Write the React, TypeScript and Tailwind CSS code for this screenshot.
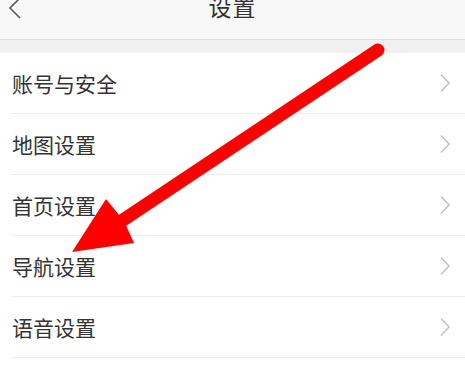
const items = ["账号与安全", "地图设置", "首页设置", "导航设置", "语音设置"]

function Chevron() {
  return (
    <svg width="12" height="20" viewBox="0 0 12 20" fill="none">
      <path d="M2 1.5 L10 10 L2 18.5" stroke="#c4c4c4" strokeWidth="1.6" strokeLinejoin="miter" />
    </svg>
  )
}

export default function App() {
  return (
    <div
      className="relative w-[465px] h-[370px] overflow-hidden bg-white"
      style={{ fontFamily: '"Noto Sans CJK SC", "Liberation Sans", sans-serif' }}
    >
      <div className="relative h-[40px] bg-[#f8f8f8] border-b border-[#dcdcdc] flex justify-center">
        <svg className="absolute left-[8px] top-[-3px]" width="14" height="22" viewBox="0 0 14 22" fill="none">
          <path d="M12 1 L2 11 L12 21" stroke="#5a5a5a" strokeWidth="1.6" />
        </svg>
        <div className="text-[23px] leading-[23px] text-[#333] mt-[-5px] tracking-[1px]">设置</div>
      </div>
      <div className="h-[13px] bg-[#f0f0f0]" />
      <div className="flex flex-col">
        {items.map((t) => (
          <div key={t} className="flex h-[61px] pl-[11px]">
            <div className="flex flex-1 items-center justify-between border-b border-[#ececec] pr-[14px]">
              <span className="text-[21px] text-[#333] pl-[1px] pt-[2px]">{t}</span>
              <Chevron />
            </div>
          </div>
        ))}
      </div>
      <svg className="absolute left-0 top-0" width="465" height="370" viewBox="0 0 465 370">
        <line x1="378" y1="50" x2="120" y2="222" stroke="#ff0000" strokeWidth="13" strokeLinecap="round" />
        <polygon points="72,252 106,199 124,221 134,243" fill="#ff0000" />
      </svg>
    </div>
  )
}
